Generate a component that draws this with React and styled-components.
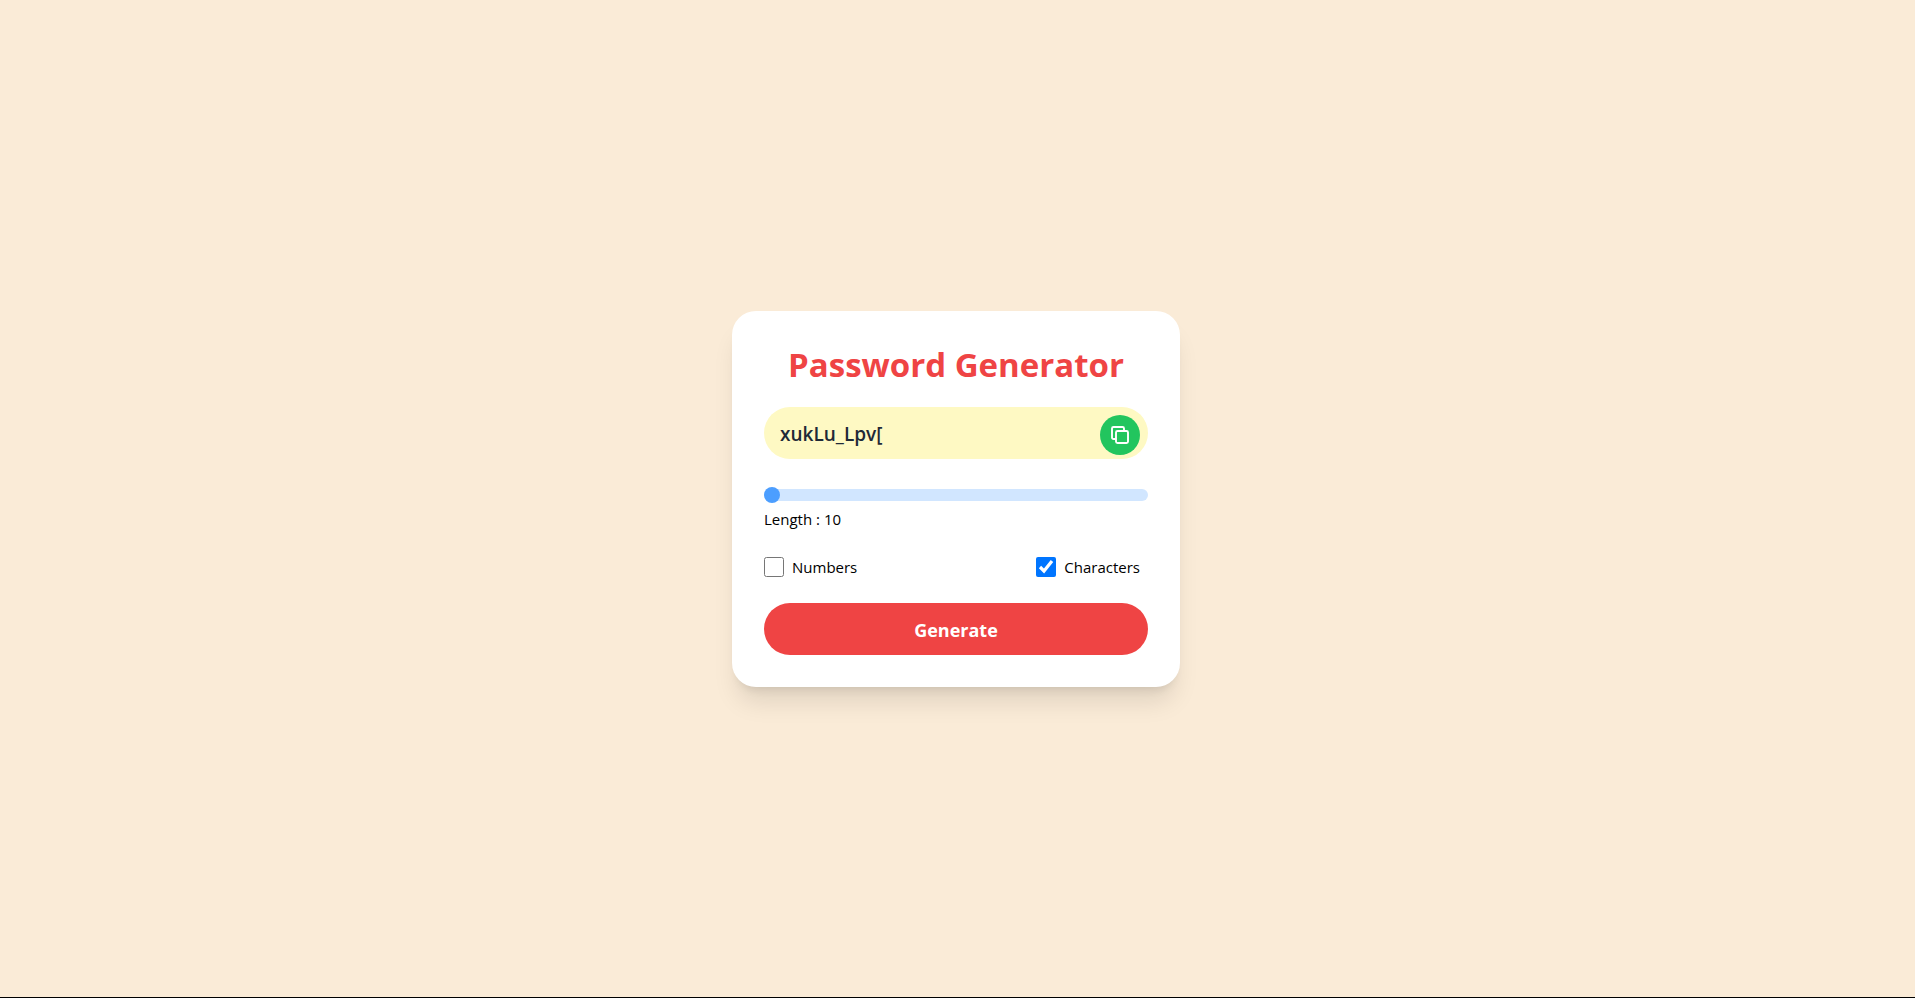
import React, { useState } from "react";
import styled, { createGlobalStyle } from "styled-components";

const GlobalStyle = createGlobalStyle`
  *, *::before, *::after { box-sizing: border-box; }
  body {
    margin: 0;
    background: #faebd7;
    color: #000;
    font-family: "Segoe UI", "Open Sans", "Noto Sans", sans-serif;
    font-size: 15px;
    line-height: 24px;
  }
  button, input { font: inherit; color: inherit; margin: 0; }
`;

const Page = styled.main`
  min-height: 100vh;
  display: flex;
  align-items: center;
  justify-content: center;
  padding-right: 3px;
  box-shadow: inset 0 -1px #000;
`;

const Card = styled.form`
  width: 100%;
  max-width: 448px;
  padding: 32px;
  border-radius: 24px;
  background: #fff;
  box-shadow: 0 20px 25px -5px rgba(0, 0, 0, 0.1), 0 8px 10px -6px rgba(0, 0, 0, 0.1);
`;

const Title = styled.h1`
  margin: 0 0 20px;
  color: #ef4444;
  font-size: 33px;
  font-weight: 700;
  line-height: 44px;
  text-align: center;
`;

const PasswordField = styled.div`
  position: relative;
  margin-bottom: 24px;
`;

const PasswordInput = styled.input`
  display: block;
  width: 100%;
  height: 52px;
  padding: 14px 56px 12px 16px;
  border: 0;
  border-radius: 26px;
  outline: 0;
  background: #fef9c3;
  color: #1f2937;
  font-size: 19px;
  font-weight: 600;
  line-height: 26px;
`;

const CopyButton = styled.button`
  position: absolute;
  top: 8px;
  right: 8px;
  display: flex;
  align-items: center;
  justify-content: center;
  width: 40px;
  height: 40px;
  padding: 0;
  border: 0;
  border-radius: 50%;
  background: #22c55e;
  color: #fff;
  cursor: pointer;
`;

const LengthField = styled.div`
  display: flex;
  flex-direction: column;
  margin-bottom: 24px;
`;

const Slider = styled.input`
  appearance: none;
  display: block;
  width: 100%;
  height: 12px;
  margin: 6px 0;
  border-radius: 6px;
  outline: 0;
  background: #d1e6ff;
  cursor: pointer;

  &::-webkit-slider-thumb {
    appearance: none;
    width: 16px;
    height: 16px;
    border: 0;
    border-radius: 50%;
    background: #4c9eff;
  }
`;

const Options = styled.div`
  display: flex;
  justify-content: space-between;
  padding-right: 8px;
  margin-bottom: 24px;
`;

const Option = styled.label`
  display: flex;
  align-items: center;
  gap: 8px;
`;

const Checkbox = styled.input`
  width: 20px;
  height: 20px;
`;

const GenerateButton = styled.button`
  display: block;
  width: 100%;
  padding: 14px 12px 12px;
  border: 0;
  border-radius: 26px;
  background: #ef4444;
  color: #fff;
  font-size: 18px;
  font-weight: 700;
  line-height: 26px;
  cursor: pointer;
`;

const LETTERS = "ABCDEFGHIJKLMNOPQRSTUVWXYZabcdefghijklmnopqrstuvwxyz";
const DIGITS = "0123456789";
const SYMBOLS = "!@#$%^&*-_+=[]{}~`";

function CopyIcon() {
  return (
    <svg width="18" height="18" viewBox="0 0 18 18" fill="none" stroke="currentColor" strokeWidth="1.9" strokeLinejoin="round" aria-hidden="true">
      <rect x="5" y="5" width="12" height="12" rx="1.5" />
      <path d="M5 13H2.5A1.5 1.5 0 0 1 1 11.5v-9A1.5 1.5 0 0 1 2.5 1h9A1.5 1.5 0 0 1 13 2.5V5" />
    </svg>
  );
}

export default function App() {
  const [password, setPassword] = useState("xukLu_Lpv[");
  const [length, setLength] = useState(10);
  const [numbers, setNumbers] = useState(false);
  const [characters, setCharacters] = useState(true);

  const generate = (event) => {
    event.preventDefault();
    const pool = LETTERS + (numbers ? DIGITS : "") + (characters ? SYMBOLS : "");
    setPassword(Array.from({ length }, () => pool[Math.floor(Math.random() * pool.length)]).join(""));
  };

  return (
    <>
      <GlobalStyle />
      <Page>
        <Card onSubmit={generate}>
          <Title>Password Generator</Title>
          <PasswordField>
            <PasswordInput type="text" value={password} readOnly aria-label="Password" />
            <CopyButton type="button" aria-label="Copy" onClick={() => navigator.clipboard?.writeText(password)}>
              <CopyIcon />
            </CopyButton>
          </PasswordField>
          <LengthField>
            <Slider id="length" type="range" min="10" max="100" value={length} onChange={(e) => setLength(Number(e.target.value))} />
            <label htmlFor="length">Length : {length}</label>
          </LengthField>
          <Options>
            <Option>
              <Checkbox type="checkbox" checked={numbers} onChange={(e) => setNumbers(e.target.checked)} />
              Numbers
            </Option>
            <Option>
              <Checkbox type="checkbox" checked={characters} onChange={(e) => setCharacters(e.target.checked)} />
              Characters
            </Option>
          </Options>
          <GenerateButton type="submit">Generate</GenerateButton>
        </Card>
      </Page>
    </>
  );
}
